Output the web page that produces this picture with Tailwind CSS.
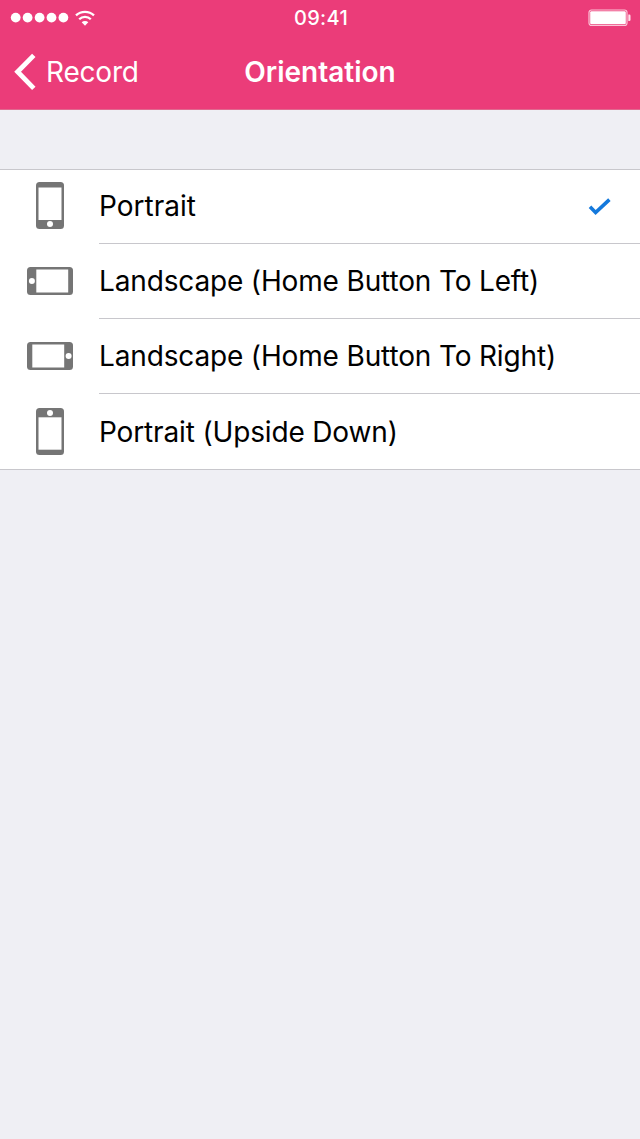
<!DOCTYPE html>
<html lang="en">
<head>
    <meta charset="UTF-8">
    <meta name="viewport" content="width=device-width, initial-scale=1.0">
    <title>Orientation</title>
    <script src="https://cdn.jsdelivr.net/npm/@tailwindcss/browser@4"></script>
</head>
<body class="bg-[#efeff4] min-h-screen font-['Inter',sans-serif] text-[28px] text-black">
    <header class="bg-[#eb3c79] h-[110px] text-white border-b border-[#e0698f]">
        <!-- Status bar -->
        <div class="grid grid-cols-3 items-center h-[35px] pl-[10px] pr-[9px]">
            <div class="flex items-center">
                <svg width="60" height="12" viewBox="0 0 60 12" fill="currentColor">
                    <circle cx="5.7" cy="5.6" r="4.9"/>
                    <circle cx="17.6" cy="5.6" r="4.9"/>
                    <circle cx="29.6" cy="5.6" r="4.9"/>
                    <circle cx="41.5" cy="5.6" r="4.9"/>
                    <circle cx="53.4" cy="5.6" r="4.9"/>
                </svg>
                <svg class="ml-[5px] mb-[1px]" width="20" height="16" viewBox="0 0 20 16" fill="none" stroke="currentColor" stroke-width="2.3">
                    <path d="M1 5.4a13 13 0 0 1 18 0"/>
                    <path d="M4.2 9.3a8.3 8.3 0 0 1 11.6 0"/>
                    <path d="M6.7 12.3a4.6 4.6 0 0 1 6.6 0L10 15.8z" fill="currentColor" stroke="none"/>
                </svg>
            </div>
            <div class="text-center text-[20px] font-medium leading-[35px] tracking-[0.3px] pl-[1px] pt-[1px]">09:41</div>
            <svg class="justify-self-end" width="43" height="18" viewBox="0 0 43 18">
                <rect x="1" y="1" width="38" height="15.5" rx="2.5" fill="none" stroke="#fbc3d6" stroke-width="1.2"/>
                <rect x="2.2" y="2.2" width="35.6" height="13.1" rx="1.2" fill="#fff"/>
                <path d="M40.3 5.5h1a1.2 1.2 0 0 1 1.2 1.2v4a1.2 1.2 0 0 1-1.2 1.2h-1z" fill="#fde0ea"/>
            </svg>
        </div>
        <!-- Navigation bar -->
        <div class="grid grid-cols-[1fr_auto_1fr] items-center h-[74px] px-[14px]">
            <a href="#" class="flex items-center">
                <svg width="23" height="38" viewBox="0 0 23 38" fill="none" stroke="currentColor" stroke-width="4.8">
                    <path d="M19.8 2.4L3.6 18.8l16.2 16.6"/>
                </svg>
                <span class="ml-[9px] tracking-[-0.2px]">Record</span>
            </a>
            <h1 class="font-semibold">Orientation</h1>
        </div>
    </header>

    <ul class="mt-[59px] bg-white border-y border-[#c8c7cc] tracking-[-0.15px]">
        <li class="flex h-[74px]">
            <div class="w-[99px] pl-[1px] pb-[3px] flex items-center justify-center">
                <svg width="28" height="47" viewBox="0 0 28 47">
                    <rect width="28" height="47" rx="3.5" fill="#757575"/>
                    <path d="M2.5 5.5h23V38h-23z" fill="#fff"/>
                    <circle cx="14" cy="42" r="3" fill="#fff"/>
                </svg>
            </div>
            <div class="flex-1 flex items-center justify-between border-b border-[#c8c7cc]">
                <span class="pb-[1px] tracking-normal">Portrait</span>
                <svg class="mr-[29px]" width="23" height="18" viewBox="0 0 23 18" fill="none" stroke="#1479dc" stroke-width="3.6">
                    <path d="M2 8.8l5.6 5.7L21.4 1.6"/>
                </svg>
            </div>
        </li>
        <li class="flex h-[75px]">
            <div class="w-[99px] pl-[1px] pb-[2px] flex items-center justify-center">
                <svg width="46" height="28" viewBox="0 0 46 28">
                    <rect width="46" height="28" rx="3.5" fill="#757575"/>
                    <path d="M9.3 2.5h31.9v23H9.3z" fill="#fff"/>
                    <circle cx="4.9" cy="14" r="3" fill="#fff"/>
                </svg>
            </div>
            <div class="flex-1 flex items-center border-b border-[#c8c7cc]">Landscape (Home Button To Left)</div>
        </li>
        <li class="flex h-[75px]">
            <div class="w-[99px] pl-[1px] pb-[2px] flex items-center justify-center">
                <svg width="46" height="28" viewBox="0 0 46 28">
                    <rect width="46" height="28" rx="3.5" fill="#757575"/>
                    <path d="M5.3 2.5h31.9v23H5.3z" fill="#fff"/>
                    <circle cx="41.6" cy="14" r="3" fill="#fff"/>
                </svg>
            </div>
            <div class="flex-1 flex items-center border-b border-[#c8c7cc]">Landscape (Home Button To Right)</div>
        </li>
        <li class="flex h-[75px]">
            <div class="w-[99px] pl-[1px] pb-[1px] flex items-center justify-center">
                <svg width="28" height="47" viewBox="0 0 28 47">
                    <rect width="28" height="47" rx="3.5" fill="#757575"/>
                    <path d="M2.5 9.3h23v32.4h-23z" fill="#fff"/>
                    <circle cx="14" cy="5" r="3" fill="#fff"/>
                </svg>
            </div>
            <div class="flex-1 flex items-center">Portrait (Upside Down)</div>
        </li>
    </ul>
</body>
</html>
